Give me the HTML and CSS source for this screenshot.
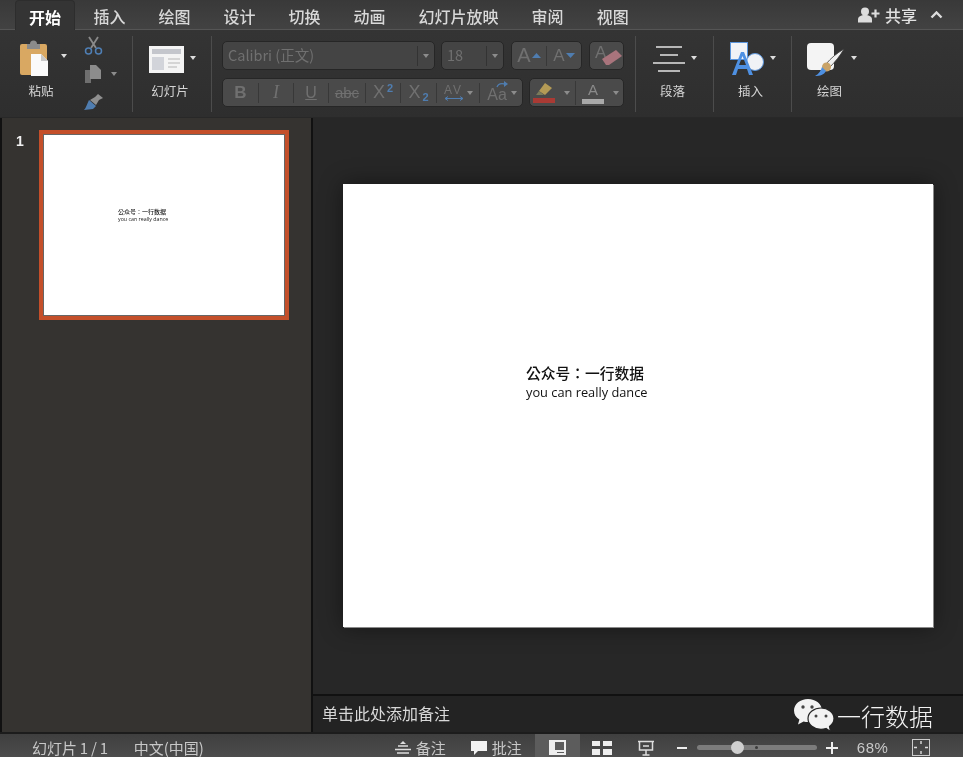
FILE: index.html
```html
<!DOCTYPE html>
<html lang="zh-CN">
<head>
    <meta charset="UTF-8">
    <meta name="viewport" content="width=device-width, initial-scale=1.0">
    <title>PowerPoint</title>
    <link rel="stylesheet" href="styles.css">
</head>
<body>
    <div class="app">
        <!-- tab strip -->
        <header class="tabs">
            <nav class="tab-list">
                <span class="tab active">开始</span>
                <span class="tab">插入</span>
                <span class="tab">绘图</span>
                <span class="tab">设计</span>
                <span class="tab">切换</span>
                <span class="tab">动画</span>
                <span class="tab">幻灯片放映</span>
                <span class="tab">审阅</span>
                <span class="tab">视图</span>
            </nav>
            <div class="share">
                <svg width="22" height="16" viewBox="0 0 22 16"><circle cx="7" cy="4.500" r="4" fill="#ddd"/><path d="M0 15.500v-3c0-3 3-4.500 7-4.500s7 1.500 7 4.500v3z" fill="#ddd"/><path d="M17.500 2.500v8M13.500 6.500h8" stroke="#ddd" stroke-width="2.200"/></svg>
                <span>共享</span>
                <svg class="chevron" width="13" height="8" viewBox="0 0 13 8"><path d="M1.500 6.500l5-5 5 5" fill="none" stroke="#ddd" stroke-width="2.400"/></svg>
            </div>
        </header>

        <!-- ribbon -->
        <section class="ribbon">
            <div class="group group-clipboard">
                <div class="tool tool-paste">
                    <div class="tool-icon">
                        <svg width="28" height="36" viewBox="0 0 28 36"><rect x="0" y="4" width="27" height="31" rx="2" fill="#d9a862"/><path d="M7 9V4h3a3.500 3.500 0 0 1 7 0h3v5z" fill="#8b8b8b"/><path d="M11 14h10l7 7v15H11z" fill="#fafafa"/><path d="M21 14v7h7z" fill="#c9c9c9"/></svg>
                        <i class="caret"></i>
                    </div>
                    <span class="tool-label">粘贴</span>
                </div>
                <div class="small-tools">
                    <svg width="19" height="19" viewBox="0 0 19 19"><path d="M5 1l7 11M14 1L7 12" stroke="#8a8a8a" stroke-width="1.800"/><circle cx="4.500" cy="15" r="3" fill="none" stroke="#4f7fb5" stroke-width="1.500"/><circle cx="14.500" cy="15" r="3" fill="none" stroke="#4f7fb5" stroke-width="1.500"/></svg>
                    <div class="copy-row">
                        <svg width="16" height="18" viewBox="0 0 16 18"><path d="M0 5h6v13H0z" fill="#6f6f6f"/><path d="M5 0h6l5 5v9H5z" fill="#8c8c8c"/></svg>
                        <i class="caret dim"></i>
                    </div>
                    <svg width="20" height="18" viewBox="0 0 20 18"><path d="M14 1l5 4-4 2-3 5-6-5 5-3z" fill="#8f8f8f"/><path d="M5 7l7 6-3 3-9 1c2-2 3-6 5-10z" fill="#4f7db0"/></svg>
                </div>
            </div>
            <i class="sep"></i>

            <div class="group group-slides">
                <div class="tool">
                    <div class="tool-icon">
                        <svg width="35" height="27" viewBox="0 0 35 27"><rect width="35" height="27" fill="#f4f4f4"/><rect x="3" y="3" width="29" height="5" fill="#c4c6cc"/><rect x="3" y="11" width="12" height="13" fill="#d2d4da"/><path d="M19 13h12M19 17h12M19 21h9" stroke="#b5b5b5" stroke-width="1.200"/></svg>
                        <i class="caret"></i>
                    </div>
                    <span class="tool-label">幻灯片</span>
                </div>
            </div>
            <i class="sep"></i>

            <div class="group group-font">
                <div class="font-row">
                    <div class="box box-name"><span class="field">Calibri (正文)</span><span class="drop"><i class="caret dim"></i></span></div>
                    <div class="box box-size"><span class="field">18</span><span class="drop"><i class="caret dim"></i></span></div>
                    <div class="box box-grow">
                        <span class="cell cell-grow">A<svg width="9" height="5" viewBox="0 0 9 5"><path d="M0 5l4.500-5 4.500 5z" fill="#4f7db0"/></svg></span>
                        <span class="cell cell-shrink">A<svg width="9" height="5" viewBox="0 0 9 5"><path d="M0 0l4.500 5 4.500-5z" fill="#4f7db0"/></svg></span>
                    </div>
                    <div class="box box-clear">
                        <span class="clear-a">A</span>
                        <svg class="eraser" width="20" height="15" viewBox="0 0 20 15"><path d="M0 9l14-9 6 6-13 9H4z" fill="#a9747c"/></svg>
                    </div>
                </div>
                <div class="font-row">
                    <div class="box box-style">
                        <span class="cell w36 bold">B</span>
                        <span class="cell w35 italic">I</span>
                        <span class="cell w35 under">U</span>
                        <span class="cell w37 strike">abc</span>
                        <span class="cell w35 script">X<sup>2</sup></span>
                        <span class="cell w36 script">X<sub>2</sub></span>
                        <span class="cell w43 spacing">
                            <span class="av">AV<svg width="20" height="5" viewBox="0 0 20 5"><path d="M1 2.500h18M1 2.500l3-2M1 2.500l3 2M19 2.500l-3-2M19 2.500l-3 2" stroke="#4f7db0" fill="none"/></svg></span>
                            <i class="caret dim"></i>
                        </span>
                        <span class="cell w44 change">
                            <span class="case">Aa<svg class="case-arrow" width="12" height="7" viewBox="0 0 12 7"><path d="M1 6c1-3 4-4 8-3" fill="none" stroke="#4f7db0" stroke-width="1.300"/><path d="M8 0l4 3-4 3z" fill="#4f7db0"/></svg></span>
                            <i class="caret dim"></i>
                        </span>
                    </div>
                    <div class="box box-color">
                        <span class="cell w46 swatch">
                            <span class="swatch-icon">
                                <svg width="18" height="13" viewBox="0 0 18 13"><path d="M10 0l7 5-7 7-6-4z" fill="#b39a55"/><path d="M4 8l5 4H1z" fill="#7a7a5a"/></svg>
                                <b class="bar bar-red"></b>
                            </span>
                            <i class="caret dim"></i>
                        </span>
                        <span class="cell w48 swatch">
                            <span class="swatch-icon">
                                <span class="swatch-a">A</span>
                                <b class="bar bar-grey"></b>
                            </span>
                            <i class="caret dim"></i>
                        </span>
                    </div>
                </div>
            </div>
            <i class="sep"></i>

            <div class="group group-para">
                <div class="tool">
                    <div class="tool-icon">
                        <svg width="32" height="26" viewBox="0 0 32 26"><path d="M3 1h26M7 9h18M0 17h32M5 25h22" stroke="#e4e4e4" stroke-width="1.600"/></svg>
                        <i class="caret"></i>
                    </div>
                    <span class="tool-label">段落</span>
                </div>
            </div>
            <i class="sep"></i>

            <div class="group group-insert">
                <div class="tool">
                    <div class="tool-icon">
                        <svg width="34" height="34" viewBox="0 0 34 34"><rect x="0.500" y="0.500" width="17" height="17" fill="#f0f2f6" stroke="#5b95dc"/><circle cx="25" cy="20" r="8.500" fill="#f0f2f6" stroke="#5b95dc"/><path d="M2 33L11 10h3l9 23h-4l-2-6H8l-2 6zM9 23h7l-3.500-9z" fill="#4e90e2"/></svg>
                        <i class="caret"></i>
                    </div>
                    <span class="tool-label">插入</span>
                </div>
            </div>
            <i class="sep"></i>

            <div class="group group-draw">
                <div class="tool">
                    <div class="tool-icon">
                        <svg width="38" height="33" viewBox="0 0 38 33"><rect width="27" height="27" rx="4" fill="#f4f4f4"/><path d="M37 6C33 13 28 19 23 24l-4-3C24 15 30 10 37 6z" fill="#f0f0f0" stroke="#3a3a3a" stroke-width="0.800"/><circle cx="19.500" cy="24" r="4.500" fill="#c9a368"/><path d="M8 33c5 0 9-1 11-5l-4-4c-1 3-3 7-7 9z" fill="#4e90e2"/></svg>
                        <i class="caret"></i>
                    </div>
                    <span class="tool-label">绘图</span>
                </div>
            </div>
        </section>

        <!-- slide list and stage -->
        <main class="workspace">
            <aside class="thumbs">
                <span class="thumb-no">1</span>
                <div class="thumb">
                    <div class="thumb-page">
                        <p class="thumb-cn" lang="zh-TW">公众号：一行数据</p>
                        <p class="thumb-en">you can really dance</p>
                    </div>
                </div>
            </aside>
            <div class="editor">
                <div class="stage">
                    <div class="slide">
                        <p class="slide-cn" lang="zh-TW">公众号：一行数据</p>
                        <p class="slide-en">you can really dance</p>
                    </div>
                </div>
                <div class="notes">单击此处添加备注</div>
            </div>
        </main>

        <!-- status bar -->
        <footer class="status">
            <span class="status-slide">幻灯片 1 / 1</span>
            <span class="status-lang">中文(中国)</span>
            <span class="status-btn btn-notes">
                <svg width="16" height="14" viewBox="0 0 16 14"><path d="M8 0l3 3H5z" fill="#ddd"/><path d="M3 5h10M0 8.500h16M2 12h12" stroke="#ddd" stroke-width="1.300"/></svg>备注
            </span>
            <span class="status-btn btn-comments">
                <svg width="16" height="14" viewBox="0 0 16 14"><path d="M0 0h16v10H7l-4 4v-4H0z" fill="#f2f2f2"/></svg>批注
            </span>
            <span class="view-btn view-active">
                <svg width="17" height="15" viewBox="0 0 17 15"><path d="M0 0h17v15H0z" fill="#eee"/><path d="M6 2h9v8H6z" fill="#5c5c5c"/><path d="M8 12.500h7" stroke="#5c5c5c"/></svg>
            </span>
            <span class="view-btn view-grid">
                <svg width="20" height="14" viewBox="0 0 20 14"><path d="M0 0h8v5H0zM11 0h9v5h-9zM0 8h8v6H0zM11 8h9v6h-9z" fill="#eee"/></svg>
            </span>
            <span class="view-btn view-show">
                <svg width="18" height="16" viewBox="0 0 18 16"><path d="M1 1.500h16M2.500 2v8h13V2M9 10v5M5.500 15h7M6 6h6" fill="none" stroke="#ddd" stroke-width="1.500"/></svg>
            </span>
            <span class="zoom-minus"></span>
            <span class="slider"><i class="slider-mid"></i><i class="slider-knob"></i></span>
            <span class="zoom-plus"></span>
            <span class="zoom-value">68%</span>
            <span class="fit">
                <svg width="18" height="17" viewBox="0 0 18 17"><rect x="0.500" y="0.500" width="17" height="16" fill="none" stroke="#ccc"/><path d="M9 2v3M9 12v3M2 8.500h3M13 8.500h3" stroke="#ddd" stroke-width="1.400"/></svg>
            </span>
        </footer>

        <!-- watermark sits over the notes bar -->
        <div class="watermark">
            <svg width="40" height="34" viewBox="0 0 40 34">
                <path d="M14 0c7.700 0 14 5 14 11.500S21.700 23 14 23c-1.600 0-3-.2-4.400-.6L4 25.500l1.400-5C2 18.500 0 15.200 0 11.500 0 5 6.300 0 14 0z" fill="#f2f2f2"/>
                <path d="M27 9c7 0 13 4.600 13 10.500 0 3.300-1.800 6-4.500 8l1 5-4.500-3c-1.600.5-3.300.8-5 .8-7 0-13-4.700-13-10.800S20 9 27 9z" fill="#f2f2f2" stroke="#232323" stroke-width="1.200"/>
                <circle cx="9" cy="8" r="1.700" fill="#444"/><circle cx="18" cy="8" r="1.700" fill="#444"/>
                <circle cx="22" cy="17" r="1.500" fill="#444"/><circle cx="32" cy="17" r="1.500" fill="#444"/>
            </svg>
            <span>一行数据</span>
        </div>
    </div>
</body>
</html>
```

FILE: styles.css
```css
:root {
    --cjk: "Noto Sans CJK SC", "Noto Sans", sans-serif;
    --cjk-doc: "Noto Sans CJK TC", "Noto Sans", sans-serif;
    --box-bg: #4a4a4a;
    --box-edge: #262626;
    --dim-text: #707070;
    --label: #d4d4d4;
}

html, body {
    margin: 0;
    padding: 0;
    background: #2a2a2a;
}

p {
    margin: 0;
}

i, b {
    display: block;
}

.app {
    position: relative;
    width: 963px;
    height: 757px;
    overflow: hidden;
    display: flex;
    flex-direction: column;
    font-family: var(--cjk);
    color: var(--label);
    filter: blur(0.35px);
}

/* tabs */
.tabs {
    flex: none;
    height: 30px;
    display: flex;
    justify-content: space-between;
    box-sizing: border-box;
    background: linear-gradient(#393939, #424242);
    border-bottom: 1px solid #555;
}

.tab-list {
    display: flex;
    padding-left: 12px;
}

.tab {
    padding: 0 16.5px;
    font-size: 16px;
    line-height: 33px;
    font-weight: 500;
    color: #d8d8d8;
}

.tab.active {
    position: relative;
    z-index: 1;
    height: 30px;
    margin-left: 3px;
    margin-right: 2px;
    padding: 0 13px;
    box-sizing: border-box;
    background: #343434;
    border: 1px solid #2d2d2d;
    border-bottom: none;
    border-radius: 4px 4px 0 0;
    font-weight: 700;
    color: #fff;
}

.share {
    display: flex;
    align-items: center;
    gap: 5px;
    padding-right: 20px;
    padding-top: 1px;
    font-size: 16px;
    font-weight: 500;
    color: #e0e0e0;
}

.chevron {
    margin-left: 8px;
}

/* ribbon */
.ribbon {
    flex: none;
    height: 88px;
    box-sizing: border-box;
    display: flex;
    background: linear-gradient(#343434, #2e2e2e);
    border-bottom: 1px solid #282828;
}

.sep {
    flex: none;
    width: 1px;
    height: 76px;
    margin-top: 6px;
    background: #4c4c4c;
}

.group {
    flex: none;
    height: 87px;
    display: flex;
    box-sizing: border-box;
}

.group-clipboard { width: 132px; padding-left: 20px; }
.group-slides { width: 78px; padding-left: 16px; }
.group-font { width: 423px; padding: 11px 0 0 10px; flex-direction: column; gap: 8px; }
.group-para { width: 77px; padding-left: 17px; }
.group-insert { width: 77px; padding-left: 16px; }
.group-draw { padding-left: 15px; }

.tool {
    display: flex;
    flex-direction: column;
    align-items: flex-start;
}

.tool-icon {
    height: 50px;
    display: flex;
    align-items: center;
    gap: 6px;
    margin-top: 4px;
}

.tool-paste {
    width: 64px;
}

.tool-paste .tool-icon {
    gap: 13px;
    margin-top: 2px;
    height: 51px;
}

.tool-label {
    font-size: 12.5px;
    line-height: 16px;
    margin-top: -1px;
    color: var(--label);
    align-self: stretch;
    text-align: center;
    padding-right: 5px;
}

.tool-paste .tool-label {
    margin-top: 0;
    padding-right: 22px;
}

.caret {
    flex: none;
    width: 0;
    height: 0;
    border-left: 3px solid transparent;
    border-right: 3px solid transparent;
    border-top: 4px solid #ddd;
    margin-top: -3px;
}

.caret.dim {
    border-top-color: #8c8c8c;
    margin-top: 0;
}

.small-tools {
    display: flex;
    flex-direction: column;
    gap: 10px;
    padding-top: 6px;
}

.copy-row {
    display: flex;
    align-items: center;
    gap: 10px;
    padding-left: 1px;
}

/* font controls */
.font-row {
    display: flex;
    gap: 6px;
    height: 29px;
}

.box {
    display: flex;
    align-items: center;
    box-sizing: border-box;
    height: 100%;
    background: var(--box-bg);
    border: 1px solid var(--box-edge);
    border-radius: 5px;
    color: var(--dim-text);
    flex: none;
}

.box-name { width: 213px; background: #444; }
.box-size { width: 63px; background: #444; }
.box-grow { width: 71px; margin-left: 1px; }
.box-clear { width: 35px; position: relative; margin-left: 1px; }
.box-style { width: 301px; }
.box-color { width: 95px; }

.field {
    flex: 1;
    padding-left: 5px;
    font-size: 14.5px;
    line-height: 1;
}

.drop {
    flex: none;
    width: 16px;
    height: 20px;
    display: flex;
    align-items: center;
    justify-content: center;
    border-left: 1px solid #333;
}

.cell {
    flex: none;
    box-sizing: border-box;
    height: 20px;
    display: flex;
    align-items: center;
    justify-content: center;
    font-size: 16px;
    border-right: 1px solid #383838;
    color: var(--dim-text);
    font-family: "Liberation Sans", sans-serif;
}

.cell:last-child {
    border-right: none;
}

.cell-grow { width: 35px; font-size: 20px; gap: 1px; }
.cell-shrink { width: 34px; font-size: 17px; gap: 1px; }

.clear-a {
    position: absolute;
    left: 5px;
    top: 1px;
    font-size: 17px;
    line-height: 20px;
    font-family: "Liberation Sans", sans-serif;
}

.eraser {
    position: absolute;
    left: 12px;
    top: 8px;
}

.w35 { width: 35px; }
.w36 { width: 36px; }
.w37 { width: 37px; }
.w43 { width: 43px; }
.w44 { width: 44px; }
.w46 { width: 46px; }
.w48 { width: 47px; }

.bold { font-weight: 700; font-size: 17px; }
.italic { font-style: italic; font-family: "Liberation Serif", serif; font-size: 18px; }
.under { text-decoration: underline; }
.strike { text-decoration: line-through; font-size: 15px; }
.script { font-size: 18px; }

.cell sup, .cell sub {
    font-size: 11px;
    color: #4f7db0;
    font-weight: 700;
    line-height: 1;
}

.cell sup { margin: -9px 0 0 2px; }
.cell sub { margin: 9px 0 0 2px; }

.spacing { gap: 3px; }

.av {
    display: flex;
    flex-direction: column;
    align-items: center;
    font-size: 12px;
    line-height: 12px;
    letter-spacing: 2px;
}

.change { gap: 4px; }

.case {
    position: relative;
    padding-top: 4px;
    font-size: 16px;
    line-height: 16px;
}

.case-arrow {
    position: absolute;
    right: -1px;
    top: -2px;
}

.swatch {
    gap: 9px;
    justify-content: flex-start;
    padding-left: 3px;
    height: 24px;
}

.swatch:last-child {
    padding-left: 6px;
}

.swatch-icon {
    width: 22px;
    display: flex;
    flex-direction: column;
    align-items: center;
}

.swatch-a {
    font-size: 15px;
    line-height: 15px;
    color: #8a8a8a;
}

.bar {
    width: 22px;
    height: 5px;
    margin-top: 2px;
}

.bar-red { background: #a93a34; }
.bar-grey { background: #a9a9a9; }

/* main area */
.workspace {
    flex: 1;
    min-height: 0;
    display: flex;
    background: #111;
}

.thumbs {
    flex: none;
    width: 309px;
    margin-left: 2px;
    position: relative;
    box-sizing: border-box;
    padding: 12px 0 0 37px;
    background: #353330;
}

.thumb-no {
    position: absolute;
    left: 14px;
    top: 14px;
    font-family: "Liberation Sans", sans-serif;
    font-size: 14px;
    line-height: 18px;
    font-weight: 700;
    color: #f0f0f0;
}

.thumb {
    width: 250px;
    height: 190px;
    box-sizing: border-box;
    border: 4px solid #c44f2a;
}

.thumb-page {
    height: 100%;
    box-sizing: border-box;
    padding: 73px 0 0 74px;
    background: #fff;
    border: 1px solid #666;
    color: #222;
}

.thumb-cn {
    font-family: var(--cjk-doc);
    font-weight: 500;
    font-size: 6px;
    line-height: 8px;
}

.thumb-en {
    font-family: "Open Sans", sans-serif;
    font-size: 5.3px;
    line-height: 6px;
}

.editor {
    flex: none;
    width: 650px;
    margin-left: 2px;
    display: flex;
    flex-direction: column;
}

.stage {
    flex: 1;
    min-height: 0;
    box-sizing: border-box;
    padding: 66px 0 0 30px;
    background: #272727;
}

.slide {
    width: 590px;
    height: 443px;
    box-sizing: border-box;
    padding: 179px 0 0 183px;
    background: #fff;
    box-shadow: 1px 1px 0 #8a8a8a, 0 0 22px rgba(0, 0, 0, 0.45);
    color: #111;
}

.slide-cn {
    font-family: var(--cjk-doc);
    font-weight: 500;
    font-size: 14.75px;
    line-height: 20px;
}

.slide-en {
    font-family: "Open Sans", sans-serif;
    font-weight: 500;
    font-size: 12.8px;
    line-height: 18px;
}

.notes {
    flex: none;
    height: 38px;
    box-sizing: border-box;
    padding-left: 9px;
    border-top: 2px solid #111;
    background: #232323;
    font-size: 16px;
    line-height: 34px;
    color: #d8d8d8;
}

/* status bar */
.status {
    flex: none;
    height: 25px;
    display: flex;
    align-items: center;
    box-sizing: border-box;
    padding-top: 4px;
    border-top: 2px solid #1c1c1c;
    background: linear-gradient(#3f3f3f, #4c4c4c);
    font-size: 15px;
    color: #c8c8c8;
}

.status-slide { margin-left: 32px; word-spacing: -0.5px; }
.status-lang { margin-left: 25.5px; }

.status-btn {
    display: flex;
    align-items: center;
    gap: 5px;
}

.btn-notes { margin-left: 191px; }
.btn-comments { margin-left: 25px; }

.view-btn {
    display: flex;
    align-items: center;
    justify-content: center;
    align-self: stretch;
    margin-top: -4px;
    padding-top: 4px;
}

.view-active {
    width: 45px;
    margin-left: 13px;
    background: #5c5c5c;
}

.view-grid { margin-left: 12px; }
.view-show { margin-left: 25px; }

.zoom-minus {
    width: 10px;
    height: 2px;
    margin-left: 22px;
    background: #eee;
}

.slider {
    position: relative;
    width: 120px;
    height: 5px;
    margin-left: 10px;
    border-radius: 3px;
    background: #7c7c7c;
}

.slider-mid {
    position: absolute;
    left: 58px;
    top: 1px;
    width: 3px;
    height: 3px;
    border-radius: 50%;
    background: #3a3a3a;
}

.slider-knob {
    position: absolute;
    left: 34px;
    top: -4px;
    width: 13px;
    height: 13px;
    border-radius: 50%;
    background: #cfcfcf;
}

.zoom-plus {
    position: relative;
    width: 12px;
    height: 2px;
    margin-left: 9px;
    background: #eee;
}

.zoom-plus::after {
    content: "";
    position: absolute;
    left: 5px;
    top: -5px;
    width: 2px;
    height: 12px;
    background: #eee;
}

.zoom-value {
    margin-left: 19px;
    font-family: "Liberation Sans", sans-serif;
    font-size: 15px;
    letter-spacing: 0.5px;
}

.fit {
    display: flex;
    margin-left: 24px;
}

/* watermark */
.watermark {
    position: absolute;
    left: 794px;
    top: 699px;
    display: flex;
    align-items: center;
    gap: 3px;
    font-size: 24px;
    font-weight: 300;
    line-height: 34px;
    color: #f2f2f2;
}
```
